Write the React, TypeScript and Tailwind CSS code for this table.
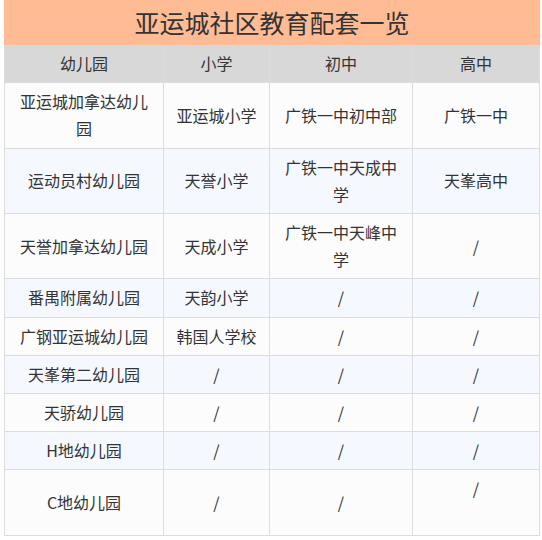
const rows: string[][] = [
  ["亚运城加拿达幼儿园", "亚运城小学", "广铁一中初中部", "广铁一中"],
  ["运动员村幼儿园", "天誉小学", "广铁一中天成中学", "天峯高中"],
  ["天誉加拿达幼儿园", "天成小学", "广铁一中天峰中学", "/"],
  ["番禺附属幼儿园", "天韵小学", "/", "/"],
  ["广钢亚运城幼儿园", "韩国人学校", "/", "/"],
  ["天峯第二幼儿园", "/", "/", "/"],
  ["天骄幼儿园", "/", "/", "/"],
  ["H地幼儿园", "/", "/", "/"],
  ["C地幼儿园", "/", "/", "/\n"],
];

const header = ["幼儿园", "小学", "初中", "高中"];

function Cell({ text, bg }: { text: string; bg: string }) {
  const [first, ...rest] = text.split("\n");
  return (
    <div className={`${bg} flex items-center justify-center px-2 py-[5px] text-center leading-[1.7]`}>
      <span>
        {first}
        {rest.length > 0 && (
          <>
            <br />
            {"\u00a0"}
          </>
        )}
      </span>
    </div>
  );
}

export default function App() {
  return (
    <div
      className="ml-[4px] w-[536px] text-[16px] text-[#333]"
      style={{ fontFamily: '"Noto Sans CJK SC", sans-serif' }}
    >
      <div className="flex h-[45px] items-center justify-center bg-[#ffbb94] text-[25px] leading-none">
        亚运城社区教育配套一览
      </div>
      <div className="grid grid-cols-[158px_105px_142px_126px] gap-px bg-[#dcdcdc] px-px pb-px">
        {header.map((h) => (
          <Cell key={h} text={h} bg="bg-[#d8d8d8]" />
        ))}
        {rows.map((row, i) =>
          row.map((c, j) => (
            <Cell key={`${i}-${j}`} text={c} bg={i % 2 === 0 ? "bg-[#fcfcfc]" : "bg-[#f5f9ff]"} />
          ))
        )}
      </div>
    </div>
  );
}
